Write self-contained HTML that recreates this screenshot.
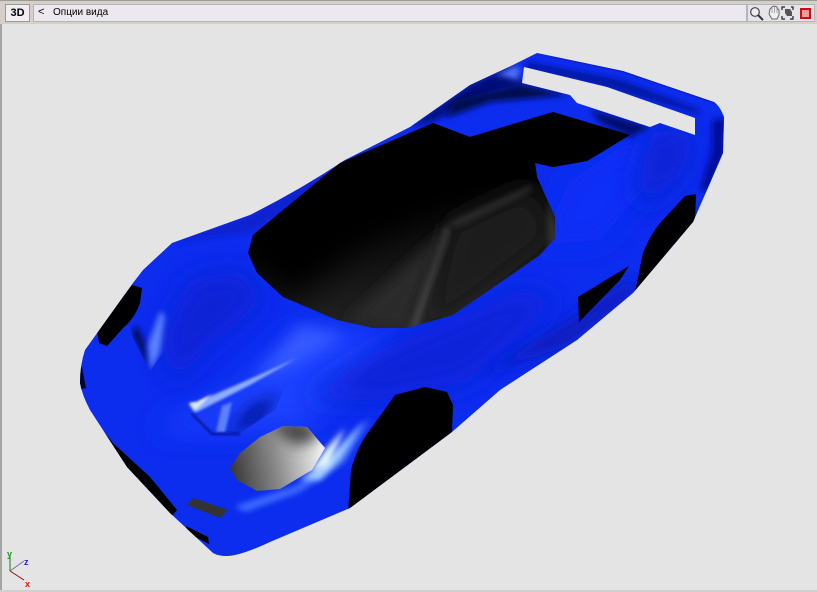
<!DOCTYPE html>
<html><head><meta charset="utf-8"><style>
html,body{margin:0;padding:0;background:#e4e4e4}
#r{position:relative;width:817px;height:592px;overflow:hidden;background:#e4e4e4;font-family:"Liberation Sans",sans-serif}
#bar{position:absolute;left:0;top:0;width:817px;height:24px;background:#d4d0c8;border-top:1px solid #9a9a9a;box-sizing:border-box}
.box{position:absolute;box-sizing:border-box;background:#ebe9ed;border:1px solid #b5b5b5}
.tx{position:absolute;font-size:10px;color:#000;white-space:nowrap}
#l{position:absolute;left:0;top:24px;width:2px;height:568px;background:#a4a4a4}
#b{position:absolute;left:0;top:590px;width:817px;height:2px;background:#d4d0c8}
svg{position:absolute;left:0;top:0}
</style></head><body><div id="r">
<div id="bar"></div>
<div class="box" style="left:5px;top:4px;width:25px;height:18px;background:#f0eef2;font:bold 11px 'Liberation Sans',sans-serif;text-align:center;line-height:16px;border-color:#999">3D</div>
<div class="box" style="left:33px;top:4px;width:714px;height:18px"></div>
<div class="tx" style="left:38px;top:6px;font-size:11px">&lt;</div>
<div class="tx" style="left:53px;top:7px">Опции вида</div>
<div class="box" style="left:747px;top:4px;width:68px;height:18px;background:#e6e4e8"></div>
<svg width="817" height="592" viewBox="0 0 817 592">
<defs>
<clipPath id="car"><path d="M537 53 623 71 714 102Q720 106 724 117L723 153 707 190 693 222 633 293 577 340 500 390 452 432 350 508 270 542Q240 556 227 556 218 556 213 553L170 513 127 467 90 410Q82 395 80 383 80 365 85 350L133 283 143 270 172 243 250 215Q300 190 345 160L410 127 470 85 513 65Z"/></clipPath>
<clipPath id="win"><path d="M248 253 253 235 340 163 433 123 470 137 553 112 630 135 587 161 553 167 535 163 537 177 555 217 555 238 540 255 453 315 407 328 373 328 337 320 283 297 257 273Z"/></clipPath>
<clipPath id="lamp"><path d="M230 468 240 453 260 437 283 426 307 427 325 448 312 470 280 489 257 491 237 480Z"/></clipPath>
<clipPath id="ls"><path d="M120 290 133 338 150 371 167 347 190 290Z"/></clipPath>
<clipPath id="rs"><path d="M192 413 212 433 240 433 275 410 290 375 200 395Z"/></clipPath>
<linearGradient id="lg" gradientUnits="userSpaceOnUse" x1="232" y1="470" x2="322" y2="452"><stop offset="0" stop-color="#3a3a3a"/><stop offset=".5" stop-color="#8e8e8e"/><stop offset="1" stop-color="#f4f4f4"/></linearGradient>
<linearGradient id="wg" gradientUnits="userSpaceOnUse" x1="405" y1="195" x2="430" y2="330"><stop offset="0" stop-color="#000"/><stop offset="1" stop-color="#282828"/></linearGradient>
<filter id="b1" x="-50%" y="-50%" width="200%" height="200%"><feGaussianBlur stdDeviation="1.2"/></filter>
<filter id="b3" x="-50%" y="-50%" width="200%" height="200%"><feGaussianBlur stdDeviation="3"/></filter>
<filter id="b6" x="-50%" y="-50%" width="200%" height="200%"><feGaussianBlur stdDeviation="7"/></filter>
<filter id="b12" x="-50%" y="-50%" width="200%" height="200%"><feGaussianBlur stdDeviation="14"/></filter>
</defs>

<g clip-path="url(#car)">
<rect x="70" y="40" width="670" height="530" fill="#0c2cee"/>
<!-- broad shading -->
<path d="M160 340 190 280 240 270 265 300 210 345 175 385Z" fill="#0c22d4" filter="url(#b12)"/>
<path d="M150 430 230 395 300 330 400 335 340 400 300 430Z" fill="#1e42ff" filter="url(#b12)"/>
<path d="M255 378 300 325 345 335 290 368Z" fill="#3458ff" filter="url(#b6)"/>
<path d="M300 400 380 350 520 290 560 300 470 380 380 400Z" fill="#0a24d8" filter="url(#b12)"/>
<path d="M480 375 570 320 630 280 640 290 570 345Z" fill="#0a1cbc" filter="url(#b6)"/>
<path d="M540 245 570 180 640 135 660 170 600 240Z" fill="#0a2ef8" filter="url(#b12)"/>
<path d="M655 128 697 136 680 175 640 210 640 175Z" fill="#0a20d0" filter="url(#b12)"/>
<path d="M712 120 726 118 724 155 708 192 700 190 712 150Z" fill="#05109a" filter="url(#b3)"/>
<path d="M172 243 250 215 345 160 300 205 250 232Z" fill="#0a22d0" filter="url(#b3)"/>
<!-- wing -->
<path d="M528 62 620 80 700 110 700 114 605 86 525 68Z" fill="#06169c" filter="url(#b3)"/>
<path d="M537 53 623 71 717 103 714 97 620 64Z" fill="#040e80" filter="url(#b1)"/>
<path d="M410 127 470 85 513 65 522 83 470 100 435 120Z" fill="#040e78" filter="url(#b3)"/>
<path d="M455 100 520 84 568 95 490 102 445 118Z" fill="#030a50" filter="url(#b3)"/>
<path d="M590 110 650 127 630 137 600 122Z" fill="#05106c" filter="url(#b3)"/>
<path d="M495 76 514 66 520 68 518 80 502 76Z" fill="#5070ff" filter="url(#b3)"/>
<!-- left scoop -->
<g clip-path="url(#ls)">
<path d="M131 333 150 373 146 345 137 325Z" fill="#050c68" filter="url(#b3)"/>
<path d="M148 345 150 372 160 352 165 315 160 312Z" fill="#5c80ff" filter="url(#b3)"/>
</g>
<!-- right scoop -->
<g clip-path="url(#rs)">
<path d="M228 434 258 424 282 394 252 404 238 420Z" fill="#0614a0" filter="url(#b6)"/>
<path d="M216 432 222 406 232 402 225 432Z" fill="#5c80ff" filter="url(#b1)"/>
</g>
<path d="M192 414 212 434 240 434" stroke="#040c60" stroke-width="1.5" fill="none" filter="url(#b1)"/>
<path d="M189 404 197 402 250 379 297 358 250 385 197 412 194 412Z" fill="#8cacff" filter="url(#b1)"/>
<path d="M189 403 197 402 212 394 199 407 195 410Z" fill="#dce8ff" filter="url(#b1)"/>
<!-- highlight around lamp -->
<path d="M235 506 295 486 330 462 372 416 345 462 300 492 245 512Z" fill="#3e6aff" filter="url(#b3)"/>
<path d="M300 480 325 462 365 420 340 460 320 480Z" fill="#a0ccff" filter="url(#b3)"/>
<path d="M310 472 325 450 345 428 328 466Z" fill="#e4fbff" filter="url(#b3)"/>
<!-- black features -->
<path d="M132 285 142 288 140 303Q135 318 123 328L107 346 99 343 97 330Z" fill="#000"/>
<path d="M82 367 86 388 78 390 78 365Z" fill="#030730"/>
<path d="M86 406 100 427 113 443 150 477 177 510 172 516 130 475 90 420Z" fill="#000"/>
<path d="M187 505 193 498 228 510 220 518Z" fill="#333"/>
<path d="M186 526 208 537 209 544 188 533Z" fill="#000"/>
<path d="M348 512 351 470Q358 445 370 430L395 395 425 387 447 392 453 405 452 432 400 472Z" fill="#000"/>
<path d="M635 292 643 253Q650 235 660 223L685 196 696 194 695 222Z" fill="#000"/>
<path d="M578 297 629 266 620 280 579 322Z" fill="#000"/>
</g>

<!-- windshield -->
<g clip-path="url(#win)">
<rect x="240" y="110" width="400" height="230" fill="url(#wg)"/>
<path d="M240 110H640V175L560 172 450 200 360 245 290 300 240 250Z" fill="#000" filter="url(#b12)"/>
<path d="M420 335 448 225 530 185 558 235 450 320Z" fill="#1a1a1a" filter="url(#b12)"/>
<path d="M407 329 446 226 451 224 418 329Z" fill="#424242" filter="url(#b3)"/>
<path d="M449 222 530 186 533 190 455 228Z" fill="#2a2a2a" filter="url(#b3)"/>
<path d="M345 322 447 228 405 330Z" fill="#2a2a2a" filter="url(#b6)"/>
<path d="M548 200 560 238 548 248Z" fill="#333" filter="url(#b3)"/>
</g>

<!-- lamp -->
<g clip-path="url(#lamp)"><rect x="225" y="420" width="105" height="75" fill="url(#lg)"/>
<path d="M270 418 312 422 320 438 296 446 280 435Z" fill="#444" filter="url(#b6)"/></g>

<!-- wing opening -->
<path d="M524 67 522 83 570 95 577 103 650 127 660 123 695 135 695 118 607 87Z" fill="#e4e4e4"/>

<!-- toolbar icons -->
<circle cx="755" cy="12" r="4.300" fill="#eee" stroke="#444" stroke-width="1.2"/>
<path d="M758 15 763 20" stroke="#333" stroke-width="2"/>
<path d="M769 14 772 19H777L779 15V10L777 8V7L774 6 772 7 770 9Z" fill="#efefef" stroke="#666" stroke-width="1"/>
<path d="M772 8V13M774.500 7V13M777 8V13" stroke="#888" stroke-width=".7"/>
<path d="M782 10V7H785M791 7H793V10M782 16V19H785M793 16V19H790" fill="none" stroke="#222" stroke-width="1.2"/>
<path d="M785 9H790L792 12V16H787L785 13Z" fill="#555"/>
<rect x="801" y="9" width="9" height="9" fill="#f09a9a" stroke="#c81010" stroke-width="2"/>

<!-- axes -->
<path d="M10 571V556" stroke="#1a7a1a" stroke-width="1"/>
<path d="M10 571 24 561" stroke="#777" stroke-width="1"/>
<path d="M10 571 24 580" stroke="#8a1010" stroke-width="1"/>
<text x="7" y="557" font-family="Liberation Sans,sans-serif" font-size="9" font-weight="bold" fill="#1a9a1a">y</text>
<text x="24" y="565" font-family="Liberation Sans,sans-serif" font-size="9" font-weight="bold" fill="#2020f0">z</text>
<text x="25" y="587" font-family="Liberation Sans,sans-serif" font-size="9" font-weight="bold" fill="#f01010">x</text>
</svg>
<div id="l"></div><div id="b"></div>
</div></body></html>
